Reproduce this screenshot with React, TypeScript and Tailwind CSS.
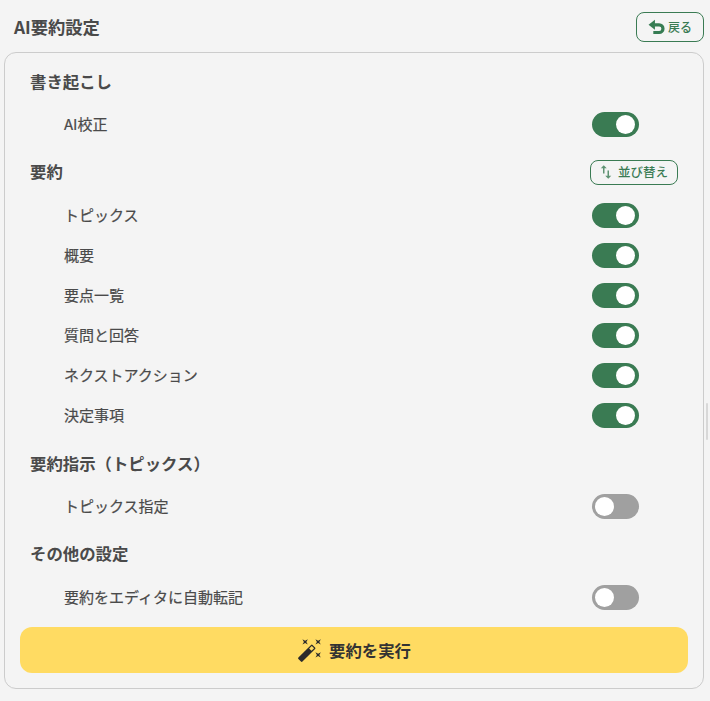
import React from 'react';
import { MdAutoFixHigh, MdSwapVert } from 'react-icons/md';

function BackIcon() {
  return (
    <svg viewBox="0 0 16 16" className="w-[17px] h-[17px] text-[#367c53]">
      <path d="M0.5 5.5 6.5 .8v9.4z" fill="currentColor" />
      <path d="M6 5.5h4.5a3.6 3.6 0 0 1 0 7.2H5" fill="none" stroke="currentColor" strokeWidth="3" />
    </svg>
  );
}

function Toggle({ on }: { on: boolean }) {
  return (
    <div className={`w-[47px] h-[25px] rounded-full flex items-center ${on ? 'bg-[#3a7b53] justify-end pr-[4px]' : 'bg-[#a0a0a0] justify-start pl-[3px]'}`}>
      <div className="w-[19px] h-[19px] rounded-full bg-white" />
    </div>
  );
}

function Row({ label, on }: { label: string; on: boolean }) {
  return (
    <div className="h-10 flex items-center justify-between pl-[59px] pr-[64px]">
      <span className="text-[15px] font-normal leading-none -translate-y-px text-[#4a4a4a] [-webkit-text-stroke:0.2px_#4a4a4a]">{label}</span>
      <Toggle on={on} />
    </div>
  );
}

function Heading({ children }: { children: React.ReactNode }) {
  return <h2 className="text-[16.4px] font-bold text-[#4a4a4a] leading-6 -translate-y-px">{children}</h2>;
}

export default function App() {
  return (
    <div className="relative w-[710px] h-[701px] bg-[#f4f4f4] overflow-hidden font-['Noto_Sans_CJK_JP','Noto_Sans',sans-serif]">
      <header className="h-[52px] flex items-center justify-between pl-[14px] pr-[6px] pt-[2px]">
        <h1 className="text-[17.3px] font-bold text-[#4a4a4a]">AI要約設定</h1>
        <button className="w-[68px] h-[30px] border border-[#3a7b53] rounded-lg flex items-center justify-center gap-[3px] text-[12px] font-medium text-[#3a7b53]">
          <BackIcon />
          戻る
        </button>
      </header>

      <div className="ml-1 mr-[6px] h-[637px] border border-[#cccccc] rounded-xl pt-[17px] flex flex-col">
        <div className="pl-[25px]"><Heading>書き起こし</Heading></div>
        <div className="mt-[10px]">
          <Row label="AI校正" on />
        </div>

        <div className="mt-[16px] flex items-center justify-between px-[25px] h-6">
          <Heading>要約</Heading>
          <button className="w-[88px] h-[25px] border border-[#3a7b53] rounded-lg flex items-center justify-center gap-[3px] pr-[3px] text-[12.5px] font-medium text-[#3a7b53]">
            <MdSwapVert className="w-[18px] h-[18px] opacity-80" />
            並び替え
          </button>
        </div>
        <div className="mt-[11px]">
          <Row label="トピックス" on />
          <Row label="概要" on />
          <Row label="要点一覧" on />
          <Row label="質問と回答" on />
          <Row label="ネクストアクション" on />
          <Row label="決定事項" on />
        </div>

        <div className="mt-[17px] pl-[25px]"><Heading>要約指示（トピックス）</Heading></div>
        <div className="mt-[10px]">
          <Row label="トピックス指定" on={false} />
        </div>

        <div className="mt-[16px] pl-[25px]"><Heading>その他の設定</Heading></div>
        <div className="mt-[11px]">
          <Row label="要約をエディタに自動転記" on={false} />
        </div>

        <button className="mt-[10px] mx-[15px] h-[46px] rounded-xl bg-[#ffdb62] flex items-center justify-center gap-[6px] text-[16.4px] font-bold text-[#333333]">
          <MdAutoFixHigh className="w-[26px] h-[26px] text-[#2b2b2b]" />
          要約を実行
        </button>
      </div>

      {/* resize handle on the right edge */}
      <div className="absolute left-[706px] top-[403px] w-[2px] h-[37px] bg-[#d8d8d8] rounded" />
    </div>
  );
}
